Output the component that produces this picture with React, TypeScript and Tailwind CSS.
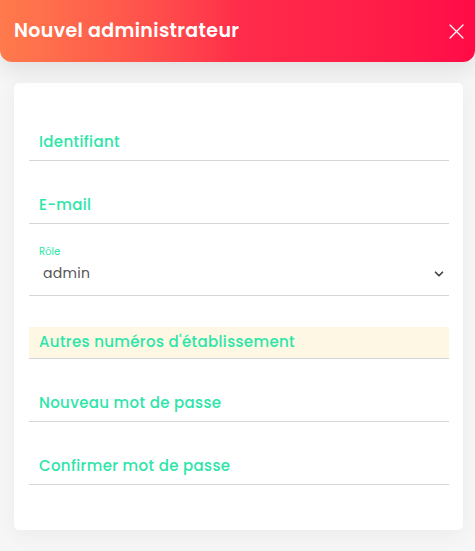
import { ChevronDown } from 'lucide-react';

const font = { fontFamily: 'Poppins, Inter, "Noto Sans", sans-serif' };

function Field({ label, className = 'mt-[27px] h-[36px]' }: { label: string; className?: string }) {
  return (
    <div className={`flex items-center border-b border-[#d6d6d6] pl-[10px] ${className}`}>
      <span className="text-[15px] font-medium tracking-[0.35px] text-[#2ee5a9]">{label}</span>
    </div>
  );
}

export default function App() {
  return (
    <div className="h-[551px] w-[475px] overflow-hidden bg-[#f6f6f6]" style={font}>
      <header className="relative z-10 flex h-[62px] items-center justify-between rounded-b-[12px] bg-gradient-to-r from-[#ff7a4c] via-[#ff2c4a] to-[#ff0a47] pl-[14px] pr-[11px] shadow-[0_8px_22px_rgba(0,0,0,0.09)]">
        <h1 className="text-[19px] font-semibold tracking-[0.35px] text-white">Nouvel administrateur</h1>
        <svg width="15" height="15" viewBox="0 0 15 15" className="text-white">
          <path d="M1 1 L14 14 M14 1 L1 14" stroke="currentColor" strokeWidth="1.3" strokeLinecap="round" />
        </svg>
      </header>

      <div className="pl-[14px] pt-[21px]">
        <div className="h-[447px] w-[449px] rounded-[5px] bg-white pl-[15px] pr-[14px] pt-[15px] shadow-[0_4px_20px_rgba(0,0,0,0.05)]">
          <Field label="Identifiant" />
          <Field label="E-mail" />

          <div className="mt-[16px] border-b border-[#d6d6d6]">
            <div className="flex h-[19px] items-end pl-[10px] text-[10px] text-[#2ee5a9]">Rôle</div>
            <div className="flex h-[36px] items-center justify-between pb-[7px] pl-[14px] pr-[3px]">
              <span className="text-[14px] tracking-[0.3px] text-[#555]">admin</span>
              <ChevronDown size={14} strokeWidth={3} className="text-[#444]" />
            </div>
          </div>

          <Field label="Autres numéros d'établissement" className="mt-[31px] h-[32px] bg-[#fdf7e4]" />
          <Field label="Nouveau mot de passe" />
          <Field label="Confirmer mot de passe" />
        </div>
      </div>
    </div>
  );
}
